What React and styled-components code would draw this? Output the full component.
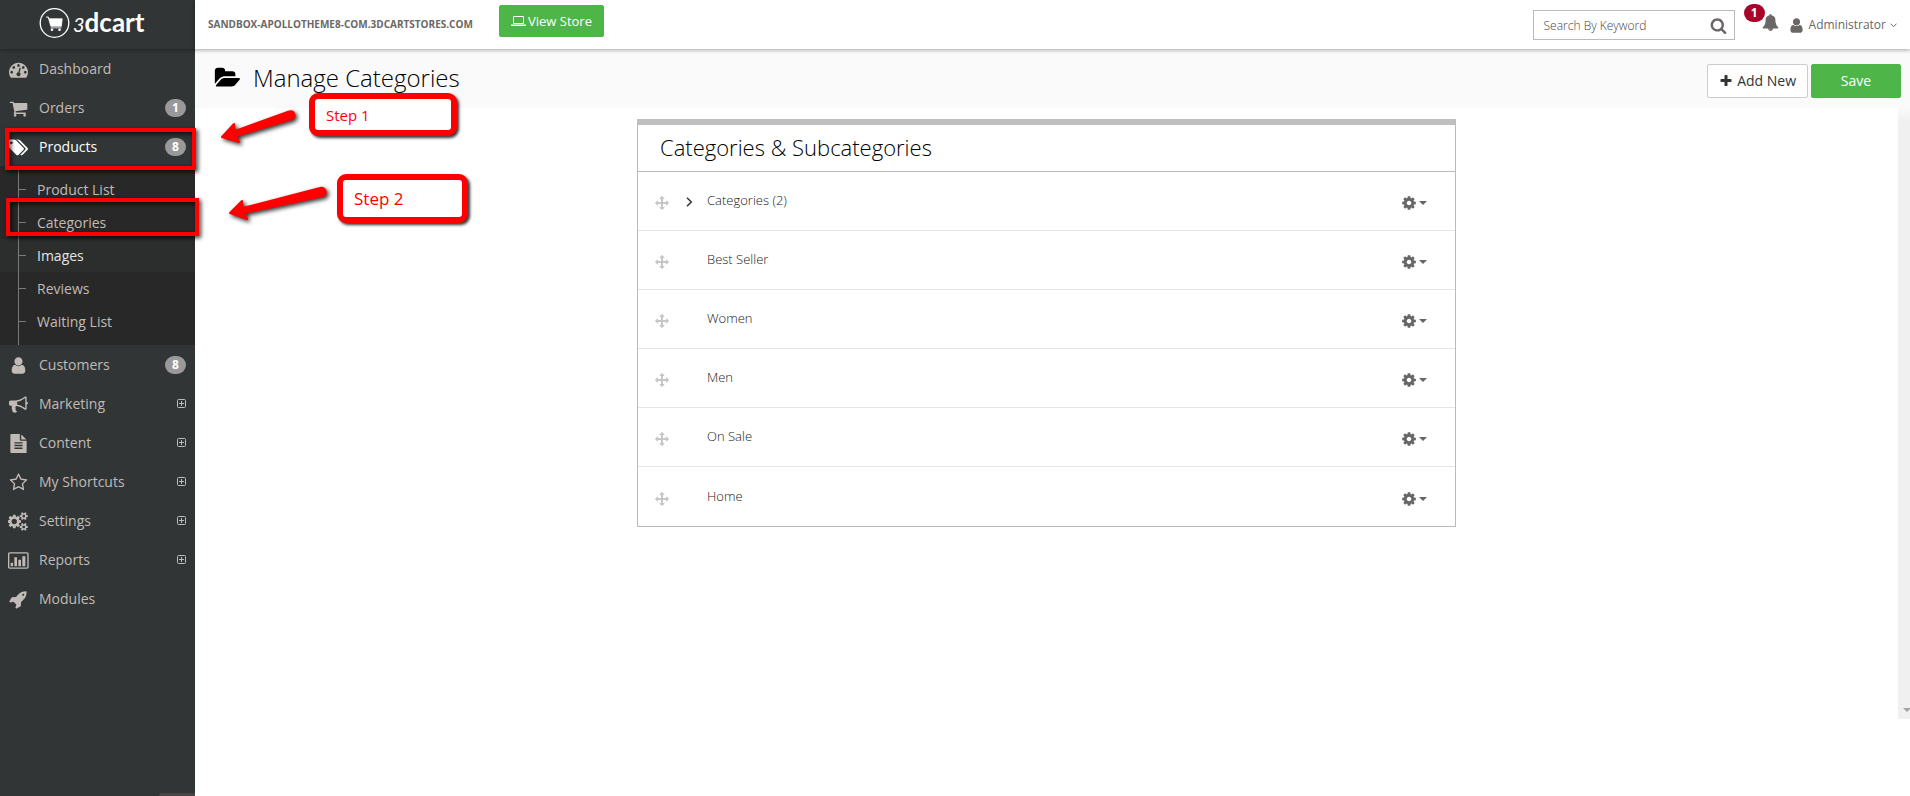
import React from "react";
import styled, { createGlobalStyle, css } from "styled-components";

const GlobalStyle = createGlobalStyle`
  *, *::before, *::after { box-sizing: border-box; }
  body {
    margin: 0;
    background: #fff;
    color: #333;
    font-family: "Open Sans", "Noto Sans", sans-serif;
    font-size: 13px;
    line-height: 20px;
  }
  a { color: inherit; text-decoration: none; }
  button { font: inherit; color: inherit; cursor: pointer; }
  h1, h2, ul { margin: 0; padding: 0; font-weight: 300; }
  ul { list-style: none; }
`;

/* ---------- icons ---------- */

const PATHS = {
  dashboard:
    "M384 1152q0-53-37.5-90.5t-90.5-37.5-90.5 37.5-37.5 90.5 37.5 90.5 90.5 37.5 90.5-37.5 37.5-90.5zm192-448q0-53-37.5-90.5t-90.5-37.5-90.5 37.5-37.5 90.5 37.5 90.5 90.5 37.5 90.5-37.5 37.5-90.5zm428 481l101-382q6-26-7.5-48.5t-38.500-29.500-48 6.500-30 39.500l-101 382q-60 5-107 43.500t-63 98.500q-20 77 20 146t117 89 146-20 89-117q16-60-6-117t-72-91zm660-33q0-53-37.500-90.500t-90.500-37.500-90.500 37.500-37.500 90.500 37.500 90.500 90.500 37.500 90.500-37.500 37.500-90.500zm-640-640q0-53-37.500-90.500t-90.500-37.500-90.500 37.500-37.500 90.500 37.500 90.500 90.500 37.500 90.500-37.500 37.500-90.500zm448 192q0-53-37.500-90.500t-90.500-37.500-90.500 37.500-37.500 90.500 37.500 90.500 90.500 37.500 90.500-37.500 37.500-90.500zm320 448q0 261-141 483-19 29-54 29h-1402q-35 0-54-29-141-221-141-483 0-182 71-348t191-286 286-191 348-71 348 71 286 191 191 286 71 348z",
  cart:
    "M704 1536q0 52-38 90t-90 38-90-38-38-90 38-90 90-38 90 38 38 90zm896 0q0 52-38 90t-90 38-90-38-38-90 38-90 90-38 90 38 38 90zm128-1088v512q0 24-16.500 42.500t-40.500 21.500l-1044 122q13 60 13 70 0 16-24 64h920q26 0 45 19t19 45-19 45-45 19h-1024q-26 0-45-19t-19-45q0-11 8-31.500t16-36 21.500-40 15.500-29.500l-177-823h-204q-26 0-45-19t-19-45 19-45 45-19h256q16 0 28.500 6.500t19.500 15.500 13 24.500 8 26 5.500 29.500 4.500 26h1201q26 0 45 19t19 45z",
  tags:
    "M448 448q0-53-37.500-90.500t-90.500-37.500-90.500 37.500-37.500 90.500 37.500 90.500 90.500 37.500 90.500-37.500 37.500-90.500zm1067 576q0 53-37 90l-491 492q-39 37-91 37-53 0-90-37l-715-716q-38-37-64.500-101t-26.500-117v-416q0-52 38-90t90-38h416q53 0 117 26.500t102 64.500l715 714q37 39 37 91zm384 0q0 53-37 90l-491 492q-39 37-91 37-36 0-59-14t-53-45l470-470q37-37 37-90 0-52-37-91l-715-714q-38-38-102-64.500t-117-26.500h224q53 0 117 26.500t102 64.500l715 714q37 39 37 91z",
  user:
    "M1536 1399q0 109-62.500 187t-150.500 78h-854q-88 0-150.500-78t-62.500-187q0-85 8.500-160.500t31.500-152 58.500-131 94-89 134.500-34.500q131 128 313 128t313-128q76 0 134.500 34.500t94 89 58.500 131 31.500 152 8.500 160.500zm-256-887q0 159-112.500 271.500t-271.500 112.500-271.500-112.500-112.500-271.500 112.500-271.500 271.500-112.500 271.500 112.500 112.500 271.500z",
  bullhorn:
    "M1664 640q53 0 90.500 37.500t37.500 90.500-37.500 90.500-90.500 37.500v384q0 52-38 90t-90 38q-417-347-812-380-58 19-91 66t-31 100.500 40 92.500q-20 33-23 65.500t6 58 33.500 55 48 50 61.500 50.500q-29 58-111.500 83t-168.500 11.500-132-55.500q-7-23-29.500-87.500t-32-94.500-23-89-15-101 3.500-98.500 22-110.500h-122q-66 0-113-47t-47-113v-192q0-66 47-113t113-47h480q435 0 896-384 52 0 90 38t38 90v384zm-128 604v-954q-394 302-768 343v270q377 42 768 341z",
  file:
    "M1596 476q14 14 28 36h-472v-472q22 14 36 28zm-476 164h544v1056q0 40-28 68t-68 28h-1344q-40 0-68-28t-28-68v-1600q0-40 28-68t68-28h800v544q0 40 28 68t68 28zm160 736v-64q0-14-9-23t-23-9h-704q-14 0-23 9t-9 23v64q0 14 9 23t23 9h704q14 0 23-9t9-23zm0-256v-64q0-14-9-23t-23-9h-704q-14 0-23 9t-9 23v64q0 14 9 23t23 9h704q14 0 23-9t9-23zm0-256v-64q0-14-9-23t-23-9h-704q-14 0-23 9t-9 23v64q0 14 9 23t23 9h704q14 0 23-9t9-23z",
  star:
    "M1201 1004l306-297-422-62-189-382-189 382-422 62 306 297-73 421 378-199 377 199zm527-357q0 22-26 48l-363 354 86 500q1 7 1 20 0 50-41 50-19 0-40-12l-449-236-449 236q-22 12-40 12-21 0-31.500-14.500t-10.500-35.500q0-6 2-20l86-500-364-354q-25-27-25-48 0-37 56-46l502-73 225-455q19-41 49-41t49 41l225 455 502 73q56 9 56 46z",
  cogs:
    "M832 896q0-106-75-181t-181-75-181 75-75 181 75 181 181 75 181-75 75-181zm768 512q0-52-38-90t-90-38-90 38-38 90q0 53 37.500 90.500t90.500 37.500 90.500-37.500 37.500-90.500zm0-1024q0-52-38-90t-90-38-90 38-38 90q0 53 37.500 90.500t90.500 37.500 90.500-37.500 37.500-90.500zm-384 421v185q0 10-7 19.500t-16 10.500l-155 24q-11 35-32 76 34 48 90 115 7 11 7 20 0 12-7 19-23 30-82.500 89.500t-78.500 59.500q-11 0-21-7l-115-90q-37 19-77 31-11 108-23 155-7 24-30 24h-186q-11 0-20-7.500t-10-17.500l-23-153q-34-10-75-31l-118 89q-7 7-20 7-11 0-21-8-144-133-144-160 0-9 7-19 10-14 41-53t47-61q-23-44-35-82l-152-24q-10-1-17-9.500t-7-19.500v-185q0-10 7-19.500t16-10.500l155-24q11-35 32-76-34-48-90-115-7-11-7-20 0-12 7-20 22-30 82-89t79-59q11 0 21 7l115 90q34-18 77-32 11-108 23-154 7-24 30-24h186q11 0 20 7.500t10 17.500l23 153q34 10 75 31l118-89q8-7 20-7 11 0 21 8 144 133 144 160 0 8-7 19-12 16-42 54t-45 60q23 48 34 82l152 23q10 2 17 10.500t7 19.500zm640 533v140q0 16-149 31-12 27-30 52 51 113 51 138 0 4-4 7-122 71-124 71-8 0-46-47t-52-68q-20 2-30 2t-30-2q-14 21-52 68t-46 47q-2 0-124-71-4-3-4-7 0-25 51-138-18-25-30-52-149-15-149-31v-140q0-16 149-31 13-29 30-52-51-113-51-138 0-4 4-7 4-2 35-20t59-34 30-16q8 0 46 46.500t52 67.500q20-2 30-2t30 2q51-71 92-112l6-2q4 0 124 70 4 3 4 7 0 25-51 138 17 23 30 52 149 15 149 31zm0-1024v140q0 16-149 31-12 27-30 52 51 113 51 138 0 4-4 7-122 71-124 71-8 0-46-47t-52-68q-20 2-30 2t-30-2q-14 21-52 68t-46 47q-2 0-124-71-4-3-4-7 0-25 51-138-18-25-30-52-149-15-149-31v-140q0-16 149-31 13-29 30-52-51-113-51-138 0-4 4-7 4-2 35-20t59-34 30-16q8 0 46 46.500t52 67.500q20-2 30-2t30 2q51-71 92-112l6-2q4 0 124 70 4 3 4 7 0 25-51 138 17 23 30 52 149 15 149 31z",
  chart:
    "M224 1120h224v320h-224zM576 576h256v864h-256zM960 832h256v608h-256zM1344 480h288v960h-288zM1824 1536v-1280q0-13-9.500-22.500t-22.500-9.500h-1664q-13 0-22.500 9.500t-9.500 22.500v1280q0 13 9.500 22.500t22.500 9.500h1664q13 0 22.500-9.500t9.500-22.500zM1952 256v1280q0 66-47 113t-113 47h-1664q-66 0-113-47t-47-113v-1280q0-66 47-113t113-47h1664q66 0 113 47t47 113z",
  rocket:
    "M1440 448q0-40-28-68t-68-28-68 28-28 68 28 68 68 28 68-28 28-68zm224-288q0 249-75.500 430.500t-253.500 360.500q-81 80-195 176l-20 379q-2 16-16 26l-384 224q-7 4-16 4-12 0-23-9l-64-64q-13-14-8-32l85-276-281-281-276 85q-3 1-9 1-14 0-23-9l-64-64q-17-19-5-39l224-384q10-14 26-16l379-20q96-114 176-195 188-187 358-258t431-71q14 0 24 9.500t10 22.500z",
  folder:
    "M1943 952q0 31-31 66l-336 396q-43 51-120.500 86.500t-143.500 35.500h-1088q-34 0-60.500-13t-26.500-43q0-31 31-66l336-396q43-51 120.500-86.500t143.500-35.500h1088q34 0 60.500 13t26.500 43zm-343-344v160h-832q-94 0-197 47.500t-164 119.500l-337 396-5 6q0-4-.5-12.500t-.5-12.500v-960q0-92 66-158t158-66h320q92 0 158 66t66 158v32h544q92 0 158 66t66 158z",
  arrows:
    "M1792 896q0 26-19 45l-256 256q-19 19-45 19t-45-19-19-45v-128h-384v384h128q26 0 45 19t19 45-19 45l-256 256q-19 19-45 19t-45-19l-256-256q-19-19-19-45t19-45 45-19h128v-384h-384v128q0 26-19 45t-45 19-45-19l-256-256q-19-19-19-45t19-45l256-256q19-19 45-19t45 19 19 45v128h384v-384h-128q-26 0-45-19t-19-45 19-45l256-256q19-19 45-19t45 19l256 256q19 19 19 45t-19 45-45 19h-128v384h384v-128q0-26 19-45t45-19 45 19l256 256q19 19 19 45z",
  bell:
    "M912 1696q0-16-16-16-59 0-101.500-42.500t-42.500-101.500q0-16-16-16t-16 16q0 73 51.500 124.500t124.500 51.500q16 0 16-16zm816-288q0 52-38 90t-90 38h-448q0 106-75 181t-181 75-181-75-75-181h-448q-52 0-90-38t-38-90q50-42 91-88t85-119.500 74.500-158.500 50-206 19.500-260q0-152 117-282.500t307-158.500q-8-19-8-39 0-40 28-68t68-28 68 28 28 68q0 20-8 39 190 28 307 158.500t117 282.500q0 139 19.500 260t50 206 74.500 158.500 85 119.500 91 88z",
  search:
    "M1216 832q0-185-131.500-316.500t-316.500-131.500-316.500 131.500-131.500 316.500 131.500 316.500 316.500 131.500 316.500-131.500 131.500-316.500zm512 832q0 52-38 90t-90 38q-54 0-90-38l-343-342q-179 124-399 124-143 0-273.500-55.500t-225-150-150-225-55.500-273.500 55.500-273.500 150-225 225-150 273.500-55.500 273.500 55.500 225 150 150 225 55.500 273.500q0 220-124 399l343 343q37 37 37 90z",
  plus:
    "M1600 736v192q0 40-28 68t-68 28h-416v416q0 40-28 68t-68 28h-192q-40 0-68-28t-28-68v-416h-416q-40 0-68-28t-28-68v-192q0-40 28-68t68-28h416v-416q0-40 28-68t68-28h192q40 0 68 28t28 68v416h416q40 0 68 28t28 68z",
  laptop:
    "M416 1280q-66 0-113-47t-47-113v-704q0-66 47-113t113-47h1088q66 0 113 47t47 113v704q0 66-47 113t-113 47h-1088zm-32-864v704q0 13 9.500 22.500t22.500 9.500h1088q13 0 22.500-9.500t9.500-22.500v-704q0-13-9.500-22.500t-22.500-9.500h-1088q-13 0-22.500 9.500t-9.500 22.500zm1376 928h160v96q0 40-47 68t-113 28h-1600q-66 0-113-28t-47-68v-96h1760z",
  cog:
    "M1152 896q0-106-75-181t-181-75-181 75-75 181 75 181 181 75 181-75 75-181zm512-109v222q0 12-8 23t-20 13l-185 28q-19 54-39 91 35 50 107 138 10 12 10 25t-9 23q-27 37-99 108t-94 71q-12 0-26-9l-138-108q-44 23-91 38-16 136-29 186-7 28-36 28h-222q-14 0-24.500-8.500t-11.500-21.500l-28-184q-49-16-90-37l-141 107q-10 9-25 9-14 0-25-11-126-114-165-168-7-10-7-23 0-12 8-23 15-21 51-66.500t54-70.500q-27-50-41-99l-183-27q-13-2-21-12.500t-8-23.500v-222q0-12 8-23t19-13l186-28q14-46 39-92-40-57-107-138-10-12-10-24 0-10 9-23 26-36 98.500-107.500t94.500-71.500q13 0 26 10l138 107q44-23 91-38 16-136 29-186 7-28 36-28h222q14 0 24.500 8.500t11.500 21.500l28 184q49 16 90 37l142-107q9-9 24-9 13 0 25 10 129 119 165 170 7 8 7 22 0 12-8 23-15 21-51 66.500t-54 70.500q26 50 41 98l183 28q13 2 21 12.500t8 23.500z",
};

/* Glyph boxes are 1792 units tall; the wide ones need a wider box. */
const BOX = {
  chart: [-32, 2016],
  laptop: [0, 1920],
  tags: [0, 1900],
  cogs: [0, 1856],
  folder: [0, 1944],
};

const IconSvg = styled.svg`
  display: block;
  flex: none;
  fill: currentColor;
`;

function Icon({ name, size = 18 }) {
  const [x, w] = BOX[name] || [0, 1792];
  return (
    <IconSvg
      aria-hidden="true"
      width={Math.round((size * w) / 1792)}
      height={size}
      viewBox={`${x} 0 ${w} 1792`}
    >
      <path d={PATHS[name]} fillRule={name === "chart" ? "evenodd" : "nonzero"} />
    </IconSvg>
  );
}

/* ---------- frame ---------- */

const Page = styled.div`
  position: relative;
  display: flex;
  min-height: 100vh;
  overflow: hidden;
`;

const Sidebar = styled.aside`
  position: relative;
  flex: none;
  width: 195px;
  background: #313535;
  color: #c0bbb7;
`;

const Brand = styled.a`
  display: flex;
  align-items: flex-start;
  height: 49px;
  padding: 8px 0 0 39px;
  color: #fff;
  box-shadow: 0 1px 4px rgba(0, 0, 0, 0.35);
`;

const Wordmark = styled.span`
  margin-left: 3px;
  font-family: Lato, sans-serif;
  font-weight: 700;
  font-size: 26px;
  line-height: 28px;
`;

const BrandDigit = styled.i`
  font-size: 20px;
  font-weight: 400;
`;

const StatusTab = styled.div`
  position: absolute;
  right: 0;
  bottom: 0;
  width: 36px;
  height: 3px;
  border-radius: 3px 0 0 0;
  background: #464444;
`;

const Main = styled.main`
  flex: 1;
  min-width: 0;
  display: flex;
  flex-direction: column;
`;

/* ---------- sidebar menu ---------- */

const MenuLink = styled.a`
  display: flex;
  align-items: center;
  height: 39px;
  padding: 0 9px 0 5px;
  font-size: 14px;
  font-weight: 500;
  color: ${(p) => (p.$active ? "#fff" : "inherit")};
`;

const MenuIcon = styled.span`
  display: flex;
  justify-content: center;
  width: 26px;
  margin-right: 8px;
  padding-top: 2px;
`;

const MenuLabel = styled.span`
  flex: 1;
`;

const pill = css`
  display: block;
  width: 21px;
  height: 18px;
  border-radius: 9px;
  color: #fff;
  font-size: 12px;
  font-weight: 700;
  line-height: 18px;
  text-align: center;
`;

const Count = styled.span`
  ${pill}
  background: #999;
`;

const Expand = styled.svg`
  display: block;
  fill: none;
  stroke: currentColor;
`;

const SubMenu = styled.ul`
  position: relative;
  padding: 7px 0;
  background: #282828;

  &::before {
    content: "";
    position: absolute;
    left: 18px;
    top: 4px;
    bottom: 0;
    border-left: 1px solid #7a7a7a;
  }
`;

const SubLink = styled.a`
  display: flex;
  align-items: center;
  gap: 11px;
  height: 33px;
  padding-left: 19px;
  font-size: 14px;
  font-weight: 500;
  color: ${(p) => (p.$hover ? "#e6e4e2" : "inherit")};
  background: ${(p) => (p.$hover ? "#2b2e2d" : "transparent")};

  &::before {
    content: "";
    width: 7px;
    border-top: 1px solid #7a7a7a;
  }
`;

/* ---------- top bar ---------- */

const TopBar = styled.header`
  position: relative;
  display: flex;
  align-items: flex-start;
  height: 49px;
  padding: 0 13px;
  background: #fff;
  color: #6b6766;
  box-shadow: 0 1px 4px rgba(0, 0, 0, 0.35);
`;

const StoreUrl = styled.span`
  width: 291px;
  padding-top: 14px;
  font-size: 10px;
  font-weight: 700;
`;

const Button = styled.button`
  display: inline-flex;
  align-items: center;
  justify-content: center;
  gap: ${(p) => (p.$small ? 2 : 4)}px;
  height: ${(p) => (p.$small ? 32 : 34)}px;
  padding: 0 11px;
  border: 1px solid ${(p) => (p.$plain ? "#ccc" : "#4eb648")};
  border-radius: 2px;
  background: ${(p) => (p.$plain ? "#fff" : "#4eb648")};
  color: ${(p) => (p.$plain ? "#333" : "#fff")};
  font-size: ${(p) => (p.$small ? 13 : 14)}px;
  font-weight: ${(p) => (p.$plain ? 400 : 500)};
  white-space: nowrap;
`;

const StoreButton = styled(Button)`
  margin-top: 5px;
`;

const SaveButton = styled(Button)`
  width: 90px;
`;

const Tools = styled.div`
  display: flex;
  align-items: flex-start;
  margin-left: auto;
`;

const SearchForm = styled.form`
  display: flex;
  align-items: center;
  width: 202px;
  height: 30px;
  margin: 10px 9px 0 0;
  padding: 0 7px 0 10px;
  border: 1px solid #bbb;
`;

const SearchInput = styled.input`
  flex: 1;
  min-width: 0;
  padding: 2px 0 0;
  border: 0;
  outline: 0;
  background: none;
  color: #6b6766;
  font: inherit;
  font-size: 12px;

  &::placeholder { color: #444; font-weight: 300; opacity: 1; }
`;

const BareButton = styled.button`
  display: flex;
  align-items: center;
  padding: 0;
  border: 0;
  background: none;
`;

const AlertButton = styled(BareButton)`
  align-items: flex-start;
  margin-top: 4px;
`;

const AlertCount = styled.span`
  ${pill}
  background: #a90329;
`;

const AlertBell = styled.span`
  margin: 10px 0 0 -3px;
`;

const Account = styled(BareButton)`
  gap: 4px;
  margin: 15px 0 0 9px;
  font-size: 12px;
`;

/* ---------- page heading ---------- */

const Heading = styled.section`
  display: flex;
  align-items: flex-start;
  height: 59px;
  padding: 15px 9px 0 19px;
  background: #fafafa;
`;

const PageTitle = styled.h1`
  display: flex;
  align-items: center;
  gap: 13px;
  margin-right: auto;
  color: #000;
  font-size: 24px;
  line-height: 28px;
`;

const Actions = styled.div`
  display: flex;
  gap: 3px;
`;

/* ---------- categories ---------- */

const Body = styled.div`
  display: flex;
`;

const Content = styled.div`
  flex: 1;
  padding: 11px 20px 40px;
`;

const Card = styled.section`
  max-width: 819px;
  margin: 0 auto;
  border: 1px solid #bbb;
  border-top: 6px solid #bfbfbf;
`;

const CardTitle = styled.h2`
  padding: 8px 22px 9px;
  border-bottom: 1px solid #bbb;
  color: #000;
  font-size: 22px;
  line-height: 29px;
`;

const Row = styled.li`
  display: flex;
  align-items: center;
  height: 59px;
  padding: 0 28px 0 17px;
  color: #222;

  &:not(:last-child) { border-bottom: 1px solid #e5e5e5; }
`;

const Handle = styled(BareButton)`
  margin-top: 4px;
  color: #c6c6c6;
  cursor: move;
`;

const Toggle = styled.span`
  display: flex;
  justify-content: center;
  width: 38px;
  padding: 2px 0 0 2px;
`;

const RowName = styled.a`
  flex: 1;
  padding-bottom: 2px;
`;

const RowMenu = styled(BareButton)`
  gap: 2px;
  margin-top: 4px;
  color: #666;
`;

const ScrollRail = styled.div`
  display: flex;
  align-items: flex-end;
  justify-content: flex-end;
  width: 12px;
  min-height: calc(100vh - 185px);
  padding-bottom: 7px;
  background: linear-gradient(#fafafa, #f0f0f0 14px);
`;

/* ---------- tutorial marks drawn over the page ---------- */

const Marks = styled.div`
  position: absolute;
  inset: 0;
  pointer-events: none;
`;

const Frame = styled.div`
  position: absolute;
  left: ${(p) => p.$x}px;
  top: ${(p) => p.$y}px;
  width: ${(p) => p.$w}px;
  height: ${(p) => p.$h}px;
  border: 4px solid #f00;
  filter: drop-shadow(2px 2px 2px rgba(0, 0, 0, 0.8));
`;

const Callout = styled.div`
  position: absolute;
  left: ${(p) => p.$x}px;
  top: ${(p) => p.$y}px;
  display: flex;
  align-items: center;
  width: ${(p) => p.$w}px;
  height: ${(p) => p.$h}px;
  padding-left: 11px;
  border: 6px solid #f00;
  border-radius: 9px;
  background: #fff;
  color: #f00;
  font-size: ${(p) => p.$size}px;
  box-shadow: 2px 2px 3px rgba(0, 0, 0, 0.8);
`;

const Arrows = styled.svg`
  position: absolute;
  left: 210px;
  top: 100px;
  fill: #f00;
  stroke: #f00;
  stroke-width: 2;
  stroke-linejoin: round;
  filter: drop-shadow(2px 2px 2px rgba(0, 0, 0, 0.8));
`;

const MENU = [
  { label: "Dashboard", icon: "dashboard" },
  { label: "Orders", icon: "cart", count: 1 },
  {
    label: "Products",
    icon: "tags",
    count: 8,
    children: ["Product List", "Categories", "Images", "Reviews", "Waiting List"],
  },
  { label: "Customers", icon: "user", count: 8 },
  { label: "Marketing", icon: "bullhorn", more: true },
  { label: "Content", icon: "file", more: true },
  { label: "My Shortcuts", icon: "star", more: true },
  { label: "Settings", icon: "cogs", more: true },
  { label: "Reports", icon: "chart", more: true },
  { label: "Modules", icon: "rocket" },
];

const CATEGORIES = ["Categories (2)", "Best Seller", "Women", "Men", "On Sale", "Home"];

function Logo() {
  return (
    <Brand href="#" aria-label="3dcart">
      <svg width="31" height="31" viewBox="0 0 31 31" fill="none" stroke="#fff">
        <circle cx="15.500" cy="15" r="14.300" strokeWidth="1.300" />
        <path d="M7 9h2.400l.8 1.800h13l-.8 7.400H11.800L9.400 9.800" fill="#fff" strokeWidth=".8" />
        <path d="M11.500 19.800h11" strokeWidth=".8" />
        <circle cx="13" cy="21.800" r="1.300" fill="#fff" stroke="none" />
        <circle cx="20.500" cy="21.800" r="1.300" fill="#fff" stroke="none" />
      </svg>
      <Wordmark>
        <BrandDigit>3</BrandDigit>dcart
      </Wordmark>
    </Brand>
  );
}

function MenuItem({ item }) {
  return (
    <li>
      <MenuLink href="#" $active={!!item.children}>
        <MenuIcon>
          <Icon name={item.icon} size={19} />
        </MenuIcon>
        <MenuLabel>{item.label}</MenuLabel>
        {item.count && <Count>{item.count}</Count>}
        {item.more && (
          <Expand width="9" height="9" viewBox="0 0 9 9" aria-hidden="true">
            <rect x=".5" y=".5" width="8" height="8" rx="1" />
            <path d="M2 4.500h5M4.500 2v5" />
          </Expand>
        )}
      </MenuLink>
      {item.children && (
        <SubMenu>
          {item.children.map((name) => (
            <li key={name}>
              <SubLink href="#" $hover={name === "Images"}>
                {name}
              </SubLink>
            </li>
          ))}
        </SubMenu>
      )}
    </li>
  );
}

function CategoryRow({ name, expandable }) {
  return (
    <Row>
      <Handle type="button" aria-label={`Move ${name}`}>
        <Icon name="arrows" size={14} />
      </Handle>
      <Toggle>
        {expandable && (
          <svg width="7" height="10" viewBox="0 0 7 10" fill="none" stroke="#333" strokeWidth="1.500">
            <path d="M1 .7 5.300 5 1 9.300" />
          </svg>
        )}
      </Toggle>
      <RowName href="#">{name}</RowName>
      <RowMenu type="button" aria-label={`Options for ${name}`}>
        <Icon name="cog" size={16} />
        <svg width="8" height="4" viewBox="0 0 8 4" fill="currentColor">
          <path d="M0 0h8L4 4z" />
        </svg>
      </RowMenu>
    </Row>
  );
}

export default function App() {
  return (
    <Page>
      <GlobalStyle />
      <Sidebar>
        <Logo />
        <nav>
          <ul>
            {MENU.map((item) => (
              <MenuItem key={item.label} item={item} />
            ))}
          </ul>
        </nav>
        <StatusTab />
      </Sidebar>

      <Main>
        <TopBar>
          <StoreUrl>SANDBOX-APOLLOTHEME8-COM.3DCARTSTORES.COM</StoreUrl>
          <StoreButton type="button" $small>
            <Icon name="laptop" size={14} />
            View Store
          </StoreButton>
          <Tools>
            <SearchForm>
              <SearchInput type="search" aria-label="Search" placeholder="Search By Keyword" />
              <BareButton type="button" aria-label="Run search">
                <Icon name="search" size={17} />
              </BareButton>
            </SearchForm>
            <AlertButton type="button" aria-label="1 notification">
              <AlertCount>1</AlertCount>
              <AlertBell>
                <Icon name="bell" size={17} />
              </AlertBell>
            </AlertButton>
            <Account type="button">
              <Icon name="user" size={17} />
              Administrator
              <svg width="7" height="5" viewBox="0 0 7 5" fill="none" stroke="currentColor">
                <path d="M.5 .7l3 3 3-3" />
              </svg>
            </Account>
          </Tools>
        </TopBar>

        <Heading>
          <PageTitle>
            <Icon name="folder" size={24} />
            Manage Categories
          </PageTitle>
          <Actions>
            <Button type="button" $plain>
              <Icon name="plus" size={14} />
              Add New
            </Button>
            <SaveButton type="button">Save</SaveButton>
          </Actions>
        </Heading>

        <Body>
          <Content>
            <Card>
              <CardTitle>Categories &amp; Subcategories</CardTitle>
              <ul>
                {CATEGORIES.map((name, i) => (
                  <CategoryRow key={name} name={name} expandable={i === 0} />
                ))}
              </ul>
            </Card>
          </Content>
          <ScrollRail>
            <svg width="7" height="4" viewBox="0 0 7 4" fill="#a3a3a3">
              <path d="M0 0h7v1L4 4z" />
            </svg>
          </ScrollRail>
        </Body>
      </Main>

      <Marks>
        <Frame $x={5} $y={128} $w={191} $h={42} />
        <Frame $x={6} $y={198} $w={193} $h={38} />
        <Callout $x={309} $y={93} $w={148} $h={43} $size={15}>
          Step 1
        </Callout>
        <Callout $x={337} $y={174} $w={131} $h={49} $size={17}>
          Step 2
        </Callout>
        <Arrows width="130" height="130" viewBox="210 100 130 130">
          <path d="M222 137l12-13 1 7 54-19.500a4 4 0 0 1 3 7.500l-56 17 3 6z" />
          <path d="M230 213l12-12 1 7 77-20a4 4 0 0 1 3 8l-79 17 3 6z" />
        </Arrows>
      </Marks>
    </Page>
  );
}
